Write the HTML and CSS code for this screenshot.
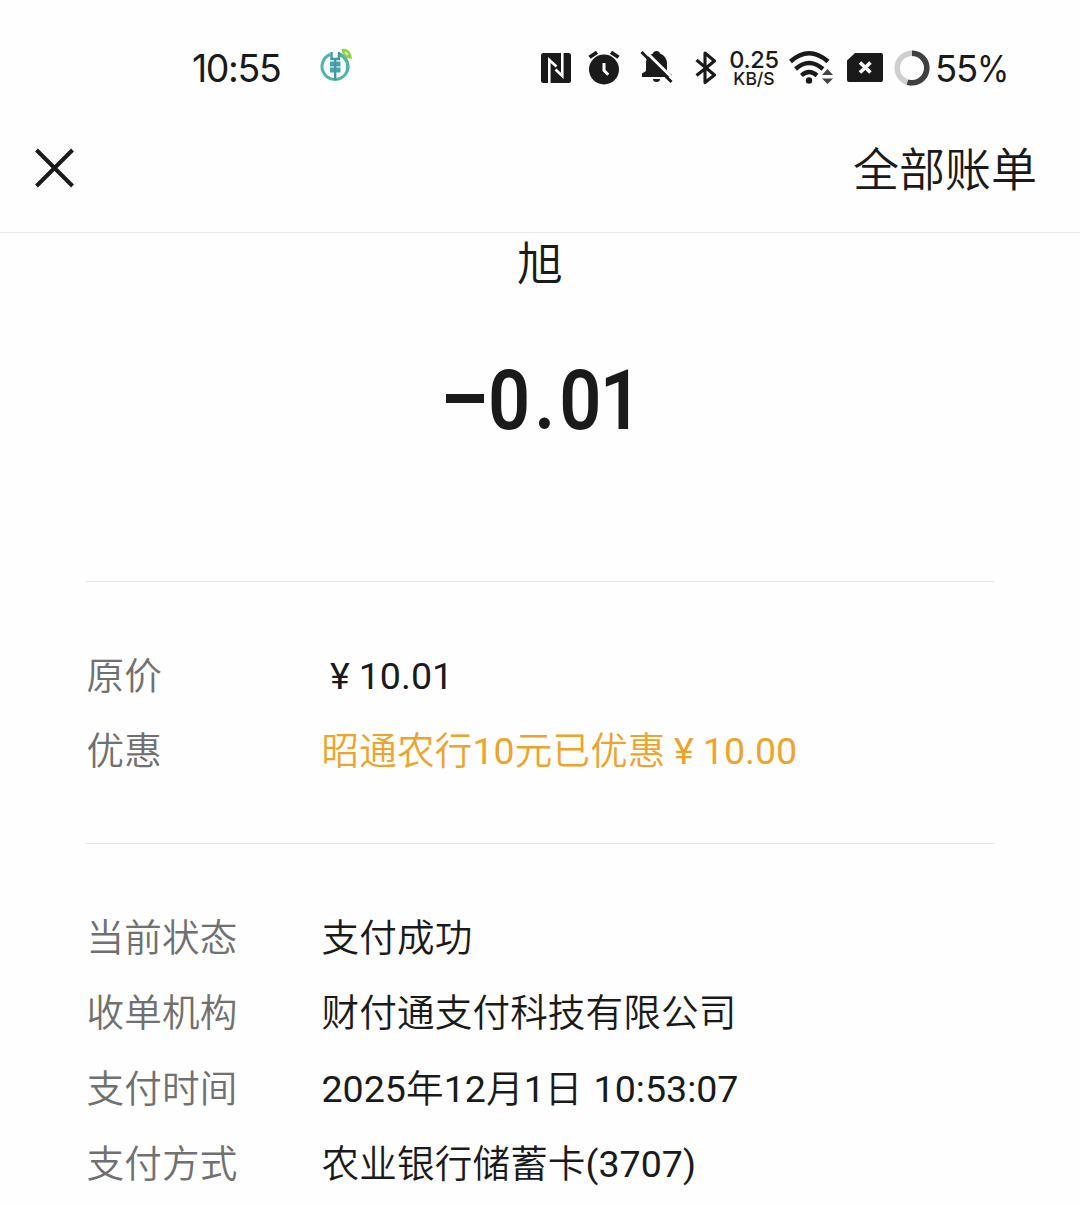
FILE: index.html
```html
<!DOCTYPE html>
<html lang="zh-CN">
<head>
<meta charset="utf-8">
<title>账单详情</title>
<link rel="stylesheet" href="styles.css">
</head>
<body>
<header class="top">
  <div class="status">
    <span class="clock">10:55</span>
    <svg class="bank" width="36" height="36" viewBox="0 0 36 36" fill="none">
      <path d="M11 6.500A13 13 0 1 0 21 6.500" stroke="#4fb5aa" stroke-width="3"/>
      <path d="M21 6.500A13 13 0 0 1 28 23" stroke="#4fb5aa" stroke-width="3"/>
      <path d="M12.500 4v7h7.500V4M16.200 12v20" stroke="#4297a8" stroke-width="2.400"/>
      <path d="M11 13.500h4.600v5H11zM16.900 13.500h4.600v5h-4.600zM11 19.500h4.600v5H11zM16.900 19.500h4.600v5h-4.600z" fill="#47a5aa"/>
      <path d="M22.500 1q9-2 10.500 10q-10-1-10.500-10z" fill="#8fd33c"/>
      <path d="M26 4l3 3" stroke="#d9f2a8" stroke-width="2"/>
    </svg>
    <div class="icons">
      <svg width="30" height="30" viewBox="0 0 30 30">
        <rect width="30" height="30" rx="2.500" fill="#1a1a1a"/>
        <path d="M8.300 30V7L15.500 13.500M21.300 0V23L14.500 16.500" fill="none" stroke="#fff" stroke-width="2.600"/>
      </svg>
      <svg class="alarm" width="32" height="34" viewBox="0 0 32 34">
        <circle cx="16" cy="18.500" r="15" fill="#1a1a1a"/>
        <path d="M1.500 6.300L9 1.200M23 1.200l7.500 5.100" stroke="#1a1a1a" stroke-width="3.800"/>
        <path d="M16 12V19.500l4.300 4.300" fill="none" stroke="#fff" stroke-width="3"/>
      </svg>
      <svg class="bell" width="34" height="34" viewBox="0 0 34 34">
        <path d="M6 20V12C6 7 9 4 13 2.500C13-1 20-1 20 2.500C24 4 27 8 27 12v8l5 4v2H2v-3.500Z" fill="#1a1a1a"/>
        <path d="M13 28h7q0 3-3.500 3t-3.500-3z" fill="#1a1a1a"/>
        <path d="M4-1L35 29.500" stroke="#fff" stroke-width="3"/>
        <path d="M1.500 1L31.500 31" stroke="#1a1a1a" stroke-width="3"/>
      </svg>
      <svg class="bt" width="22" height="34" viewBox="0 0 22 34">
        <path d="M1.500 9L19.500 24L10 31.500V2L19.500 10L1.500 24.500" fill="none" stroke="#1a1a1a" stroke-width="3.100" stroke-linejoin="round"/>
      </svg>
      <div class="speed"><b>0.25</b><i>KB/S</i></div>
      <svg class="wifi" width="44" height="34" viewBox="0 0 44 34">
        <g fill="none" stroke="#1a1a1a" stroke-width="4.400">
          <path d="M1.500 10.500Q20-6 39 10.500"/>
          <path d="M6.500 18Q20 6 34 18"/>
          <path d="M12.500 24.500Q20 17.500 28 24.500"/>
        </g>
        <circle cx="20" cy="29.500" r="3.200" fill="#1a1a1a"/>
        <path d="M33 24l5.500-6 5.500 6zM33 27.500h11l-5.500 5.500z" fill="#444"/>
      </svg>
      <svg class="sim" width="36" height="29" viewBox="0 0 36 29">
        <path d="M8 0H34q2 0 2 2V27q0 2-2 2H2q-2 0-2-2V7.500Z" fill="#1a1a1a"/>
        <path d="M13 9.500l10.500 10M23.500 9.500L13 19.500" stroke="#fff" stroke-width="3.600"/>
      </svg>
      <svg class="ring" width="36" height="36" viewBox="0 0 36 36" fill="none" stroke-width="5.500">
        <circle cx="18" cy="18" r="14.800" stroke="#cfcfcf"/>
        <path d="M18 3.200A14.800 14.800 0 1 1 13.500 32.100" stroke="#404040"/>
      </svg>
      <span class="pct">55<span class="sign">%</span></span>
    </div>
  </div>
  <nav class="nav">
    <svg width="40" height="40" viewBox="0 0 40 40"><path d="M2.500 2l36 36M38.500 2L2.500 38" stroke="#1a1a1a" stroke-width="4"/></svg>
    <span class="all">全部账单</span>
  </nav>
</header>
<main class="bill">
  <h1 class="payee">旭</h1>
  <div class="amount"><span class="minus"></span><span class="value"><span class="whole">0.</span><span class="cents">01</span></span></div>
  <dl class="rows price">
    <dt>原价</dt><dd><span class="yen">¥</span><span class="num">10.01</span></dd>
    <dt>优惠</dt><dd class="promo">昭通农行<span class="num">10</span>元已优惠<span class="yen">¥</span><span class="num">10.00</span></dd>
  </dl>
  <dl class="rows info">
    <dt>当前状态</dt><dd>支付成功</dd>
    <dt>收单机构</dt><dd>财付通支付科技有限公司</dd>
    <dt>支付时间</dt><dd><span class="num">2025</span>年<span class="num">12</span>月<span class="num">1</span>日<span class="num time">10:53:07</span></dd>
    <dt>支付方式</dt><dd>农业银行储蓄卡<span class="num">(3707)</span></dd>
  </dl>
</main>
</body>
</html>
```
FILE: styles.css
```css
* { box-sizing: border-box; margin: 0; padding: 0; }
body {
  height: 1205px;
  overflow: hidden;
  background: #fefefe;
  color: #1a1a1a;
  font-family: "Noto Sans CJK SC", sans-serif;
  font-weight: 350;
}
svg { display: block; flex: none; overflow: visible; }
.top { height: 233px; border-bottom: 1px solid #e8e8e8; }
.status {
  display: flex;
  align-items: center;
  height: 136px;
  padding-left: 192px;
}
.clock { width: 127px; font: 37.5px Inter, sans-serif; letter-spacing: -1.4px; }
.bank { margin-top: -4px; }
.icons { display: flex; align-items: center; margin: -1px 0 0 186px; }
.alarm { margin-left: 17px; }
.bell { margin-left: 20px; }
.bt { margin-left: 21px; }
.speed {
  display: flex;
  flex-direction: column;
  align-items: center;
  width: 52px;
  margin: 2px 0 0 11px;
  font-family: Inter, sans-serif;
}
.speed b { font-size: 23.5px; line-height: 20px; font-weight: 550; letter-spacing: -0.3px; }
.speed i { font-size: 17.5px; line-height: 18px; font-weight: 550; font-style: normal; }
.wifi { margin-left: 9px; }
.sim { margin-left: 14px; }
.ring { margin-left: 11px; }
.pct { margin: 2px 0 0 5px; font: 36.5px Inter, sans-serif; letter-spacing: -1.3px; }
.sign { display: inline-block; transform: scaleX(0.9); transform-origin: left; }
.nav {
  display: flex;
  align-items: center;
  justify-content: space-between;
  height: 64px;
  padding: 0 43px 0 34px;
}
.all { margin-top: -4px; font-size: 46px; line-height: 64px; }
.payee { height: 62px; font-size: 46px; line-height: 54px; font-weight: 350; text-align: center; }
.amount {
  display: flex;
  align-items: center;
  height: 210px;
  padding-left: 446px;
  font: 600 84px Roboto, sans-serif;
}
.minus { width: 38px; height: 9px; margin: -4px 4px 0 0; background: #1a1a1a; }
.value { transform: scaleX(0.88); transform-origin: left; }
.whole { letter-spacing: 4.5px; }
.cents { letter-spacing: -2px; }
.rows {
  display: grid;
  grid-template-columns: 235.5px 1fr;
  grid-auto-rows: 75.5px;
  margin: 0 86px;
  border-top: 1px solid #e5e5e5;
  font-size: 37.6px;
  line-height: 75.5px;
  letter-spacing: 0.15px;
  white-space: nowrap;
}
.price { height: 262px; margin-top: 76px; padding-top: 52.5px; }
.info { padding-top: 52.5px; }
dt { padding-left: 0.5px; color: #707070; }
.promo { color: #eda42c; }
.num, .yen { font-family: Roboto, sans-serif; font-weight: 370; letter-spacing: 0; }
.yen { margin: 0 9px 0 8.5px; }
.time { margin-left: 11px; }
```
